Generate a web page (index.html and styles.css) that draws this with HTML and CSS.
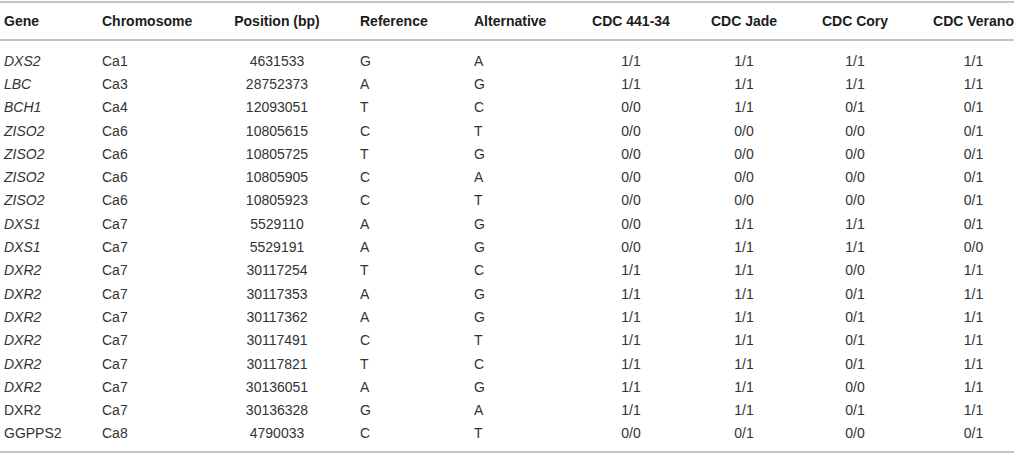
FILE: index.html
```html
<!DOCTYPE html>
<html>
<head>
<meta charset="utf-8">
<link rel="stylesheet" href="styles.css">
</head>
<body>
<div class="table-wrap">
<table class="geno">
<colgroup>
<col class="w1"><col class="w2"><col class="w3"><col class="w4"><col class="w5"><col class="w6"><col class="w7"><col class="w8"><col class="w9">
</colgroup>
<thead>
<tr><th>Gene</th><th>Chromosome</th><th>Position (bp)</th><th>Reference</th><th>Alternative</th><th>CDC 441-34</th><th>CDC Jade</th><th>CDC Cory</th><th>CDC Verano</th></tr>
</thead>
<tbody>
<tr><td><i>DXS2</i></td><td>Ca1</td><td>4631533</td><td>G</td><td>A</td><td>1/1</td><td>1/1</td><td>1/1</td><td>1/1</td></tr>
<tr><td><i>LBC</i></td><td>Ca3</td><td>28752373</td><td>A</td><td>G</td><td>1/1</td><td>1/1</td><td>1/1</td><td>1/1</td></tr>
<tr><td><i>BCH1</i></td><td>Ca4</td><td>12093051</td><td>T</td><td>C</td><td>0/0</td><td>1/1</td><td>0/1</td><td>0/1</td></tr>
<tr><td><i>ZISO2</i></td><td>Ca6</td><td>10805615</td><td>C</td><td>T</td><td>0/0</td><td>0/0</td><td>0/0</td><td>0/1</td></tr>
<tr><td><i>ZISO2</i></td><td>Ca6</td><td>10805725</td><td>T</td><td>G</td><td>0/0</td><td>0/0</td><td>0/0</td><td>0/1</td></tr>
<tr><td><i>ZISO2</i></td><td>Ca6</td><td>10805905</td><td>C</td><td>A</td><td>0/0</td><td>0/0</td><td>0/0</td><td>0/1</td></tr>
<tr><td><i>ZISO2</i></td><td>Ca6</td><td>10805923</td><td>C</td><td>T</td><td>0/0</td><td>0/0</td><td>0/0</td><td>0/1</td></tr>
<tr><td><i>DXS1</i></td><td>Ca7</td><td>5529110</td><td>A</td><td>G</td><td>0/0</td><td>1/1</td><td>1/1</td><td>0/1</td></tr>
<tr><td><i>DXS1</i></td><td>Ca7</td><td>5529191</td><td>A</td><td>G</td><td>0/0</td><td>1/1</td><td>1/1</td><td>0/0</td></tr>
<tr><td><i>DXR2</i></td><td>Ca7</td><td>30117254</td><td>T</td><td>C</td><td>1/1</td><td>1/1</td><td>0/0</td><td>1/1</td></tr>
<tr><td><i>DXR2</i></td><td>Ca7</td><td>30117353</td><td>A</td><td>G</td><td>1/1</td><td>1/1</td><td>0/1</td><td>1/1</td></tr>
<tr><td><i>DXR2</i></td><td>Ca7</td><td>30117362</td><td>A</td><td>G</td><td>1/1</td><td>1/1</td><td>0/1</td><td>1/1</td></tr>
<tr><td><i>DXR2</i></td><td>Ca7</td><td>30117491</td><td>C</td><td>T</td><td>1/1</td><td>1/1</td><td>0/1</td><td>1/1</td></tr>
<tr><td><i>DXR2</i></td><td>Ca7</td><td>30117821</td><td>T</td><td>C</td><td>1/1</td><td>1/1</td><td>0/1</td><td>1/1</td></tr>
<tr><td><i>DXR2</i></td><td>Ca7</td><td>30136051</td><td>A</td><td>G</td><td>1/1</td><td>1/1</td><td>0/0</td><td>1/1</td></tr>
<tr><td>DXR2</td><td>Ca7</td><td>30136328</td><td>G</td><td>A</td><td>1/1</td><td>1/1</td><td>0/1</td><td>1/1</td></tr>
<tr><td>GGPPS2</td><td>Ca8</td><td>4790033</td><td>C</td><td>T</td><td>0/0</td><td>0/1</td><td>0/0</td><td>0/1</td></tr>
</tbody>
</table>
</div>
</body>
</html>
```

FILE: styles.css
```css
html, body {
  margin: 0;
  padding: 0;
  background: #fff;
}
body {
  font-family: "Liberation Sans", Arial, Helvetica, sans-serif;
  font-size: 14px;
  color: #333;
}
.table-wrap {
  width: 1014px;
  margin-top: 1px;
  border-top: 2px solid #c4c4c4;
  border-bottom: 2px solid #c4c4c4;
}
.geno {
  width: 1014px;
  table-layout: fixed;
  border-collapse: collapse;
  border-spacing: 0;
}
.w1 { width: 102px; }
.w2 { width: 92px; }
.w3 { width: 166px; }
.w4 { width: 114px; }
.w5 { width: 101px; }
.w6 { width: 112px; }
.w7 { width: 114px; }
.w8 { width: 108px; }
.w9 { width: 105px; }
.geno th,
.geno td {
  padding: 0;
  text-align: left;
  white-space: nowrap;
  vertical-align: middle;
}
.geno th {
  height: 36px;
  font-weight: bold;
  color: #1c1c1c;
  border-bottom: 2px solid #c4c4c4;
}
.geno td {
  height: 23.3px;
}
.geno tbody tr:first-child td {
  padding-top: 8px;
}
.geno tbody tr:last-child td {
  padding-bottom: 6px;
}
.geno th:nth-child(1),
.geno td:nth-child(1) {
  padding-left: 4px;
}
.geno th:nth-child(n+6),
.geno td:nth-child(n+6),
.geno th:nth-child(3),
.geno td:nth-child(3) {
  text-align: center;
}
.geno th:nth-child(9),
.geno td:nth-child(9) {
  padding-left: 24px;
}
.geno i {
  font-style: italic;
}
```
